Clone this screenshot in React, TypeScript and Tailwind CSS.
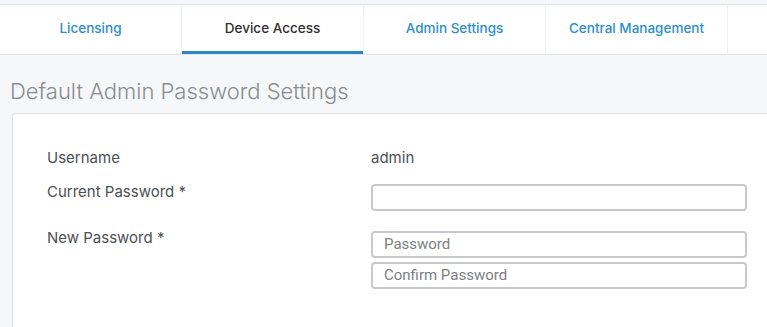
const tabs = ['Licensing', 'Device Access', 'Admin Settings', 'Central Management']

export default function App() {
  return (
    <div className="w-[767px] h-[327px] overflow-hidden bg-[#f6f7f9]" style={{ fontFamily: 'Inter, "Noto Sans", sans-serif' }}>
      {/* Tab bar */}
      <div className="mt-[4px] flex h-[51px] border-y border-[#e2e4e7] bg-white">
        {tabs.map((t) => {
          const active = t === 'Device Access'
          return (
            <div
              key={t}
              className={
                'relative flex w-[182px] items-center justify-center border-r border-[#f0f1f3] pb-[2px] text-[13.5px] font-medium ' +
                (active ? 'text-[#2f2f2f]' : 'text-[#2d8fcb]')
              }
            >
              {t}
              {active && <div className="absolute bottom-0 left-0 right-0 h-[3px] bg-[#2a86c4]" />}
            </div>
          )
        })}
      </div>

      {/* Title */}
      <div className="pl-[10px] pt-[22px] text-[22px] font-light leading-[28px] text-[#8a8c8f]">Default Admin Password Settings</div>

      {/* Panel */}
      <div className="ml-[12px] mt-[8px] h-[300px] rounded-tl-[3px] border-l border-t border-[#dcdfe2] bg-white pl-[34px] pt-[34px] text-[15px] text-[#4d5053]">
        <div className="flex h-[20px] items-center">
          <div className="w-[324px]">Username</div>
          <div>admin</div>
        </div>
        <div className="mt-[14px] flex">
          <div className="w-[324px] leading-[20px]">Current Password *</div>
          <div className="mt-[2px] h-[27px] w-[376px] rounded-[4px] border-2 border-[#c7c9cc] bg-white" />
        </div>
        <div className="mt-[20px] flex">
          <div className="w-[324px] leading-[14px]">New Password *</div>
          <div className="flex flex-col gap-[4px]">
            <div className="flex h-[27px] w-[376px] items-center rounded-[4px] border-2 border-[#c7c9cc] bg-white pl-[11px] text-[15px] text-[#7d7f82]" style={{ fontFamily: 'Roboto, sans-serif' }}>
              Password
            </div>
            <div className="flex h-[27px] w-[376px] items-center rounded-[4px] border-2 border-[#c7c9cc] bg-white pl-[11px] text-[15px] text-[#7d7f82]" style={{ fontFamily: 'Roboto, sans-serif' }}>
              Confirm Password
            </div>
          </div>
        </div>
      </div>
    </div>
  )
}
